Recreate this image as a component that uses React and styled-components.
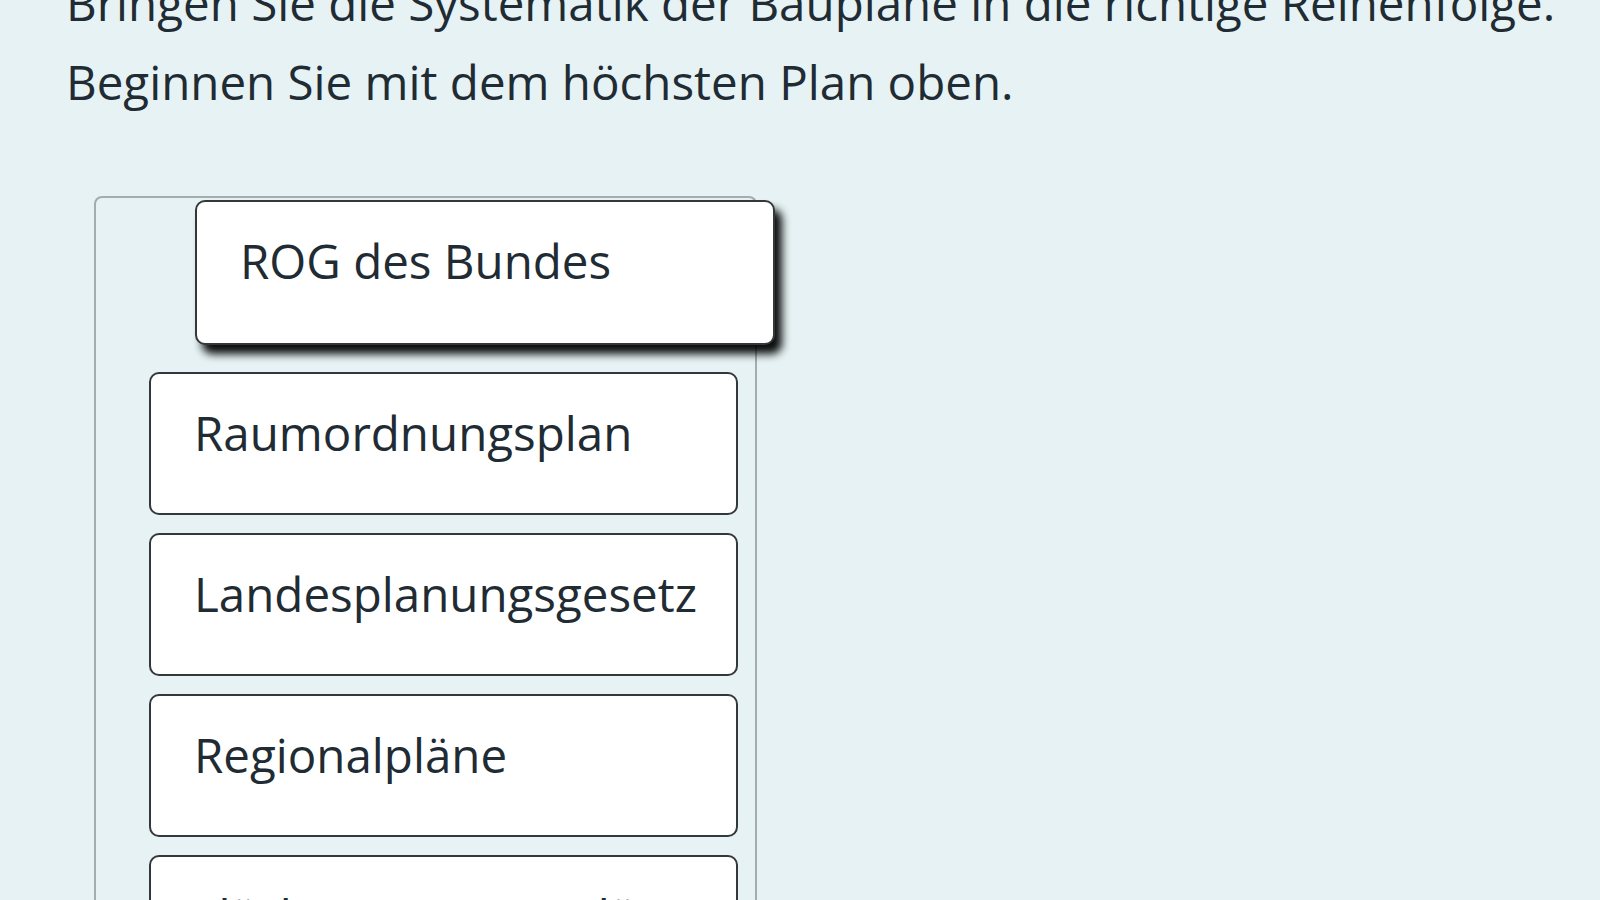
import React from "react";
import styled, { createGlobalStyle } from "styled-components";

const Global = createGlobalStyle`
  html, body {
    margin: 0;
    padding: 0;
    height: 100%;
    overflow: hidden;
    background: #e6f2f3;
  }
  body {
    font-family: "Open Sans", "Noto Sans", sans-serif;
    color: #212b33;
  }
`;

const Page = styled.div`
  width: 1600px;
  height: 900px;
  overflow: hidden;
  padding-left: 66px;
  box-sizing: border-box;
`;

const Instruction = styled.p`
  margin: -37px 0 0 0;
  font-size: 47.5px;
  line-height: 79px;
  width: 1530px;
  white-space: nowrap;
`;

const SortList = styled.ul`
  list-style: none;
  margin: 75px 0 0 28px;
  padding: 12px 15px 0 53px;
  width: 663px;
  box-sizing: border-box;
  border: 2px solid #a3adae;
  border-bottom: none;
  border-radius: 8px 8px 0 0;
  display: flex;
  flex-direction: column;
  gap: 18px;
  height: 800px;
`;

const Item = styled.li`
  box-sizing: border-box;
  width: ${(p) => p.$width || 589}px;
  height: 143px;
  padding: 19px 20px 0 43px;
  background: #ffffff;
  border: 2px solid #33383a;
  border-radius: 10px;
  font-size: 47.5px;
  line-height: 79px;
  white-space: nowrap;
  flex: none;
`;

const DraggedItem = styled(Item)`
  position: relative;
  left: 46px;
  top: -10px;
  z-index: 2;
  height: 145px;
  margin-bottom: -1px;
  box-shadow: 7px 9px 9px rgba(0, 0, 0, 0.95);
`;

const items = [
  "Raumordnungsplan",
  "Landesplanungsgesetz",
  "Regionalpläne",
  "Flächennutzungspläne",
  "Bebauungspläne",
];

export default function App() {
  return (
    <Page>
      <Global />
      <Instruction>
        Bringen Sie die Systematik der Baupläne in die richtige Reihenfolge.
        <br />
        Beginnen Sie mit dem höchsten Plan oben.
      </Instruction>
      <SortList>
        <DraggedItem $width={580}>ROG des Bundes</DraggedItem>
        {items.map((t) => (
          <Item key={t}>{t}</Item>
        ))}
      </SortList>
    </Page>
  );
}
